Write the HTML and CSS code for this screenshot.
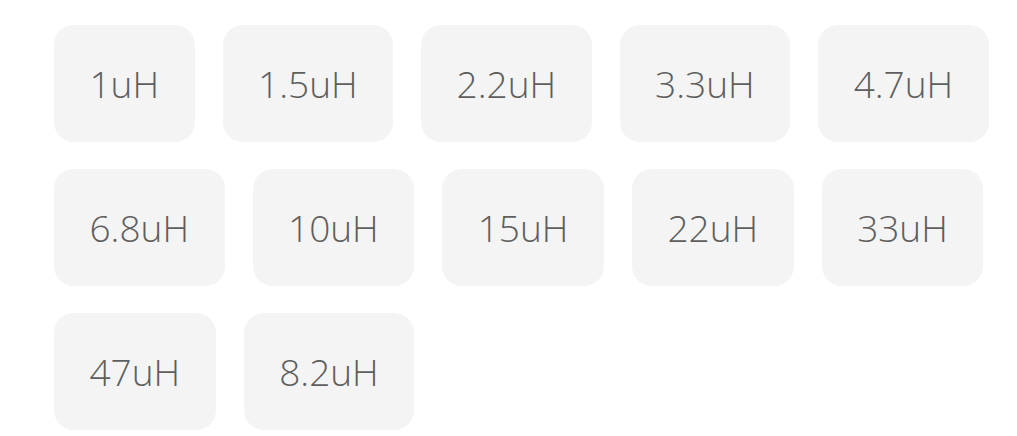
FILE: index.html
```html
<!DOCTYPE html>
<html>
<head>
<meta charset="utf-8">
<link rel="stylesheet" href="styles.css">
</head>
<body>
<div class="chips">
  <div class="chip">1uH</div>
  <div class="chip">1.5uH</div>
  <div class="chip">2.2uH</div>
  <div class="chip">3.3uH</div>
  <div class="chip">4.7uH</div>
  <div class="chip">6.8uH</div>
  <div class="chip">10uH</div>
  <div class="chip">15uH</div>
  <div class="chip">22uH</div>
  <div class="chip">33uH</div>
  <div class="chip">47uH</div>
  <div class="chip">8.2uH</div>
</div>
</body>
</html>
```
FILE: styles.css
```css
html, body {
  margin: 0;
  padding: 0;
  background: #ffffff;
}
.chips {
  display: flex;
  flex-wrap: wrap;
  column-gap: 28px;
  row-gap: 27px;
  padding: 25px 0 0 54px;
  width: 960px;
}
.chip {
  background: #f4f4f4;
  border-radius: 20px;
  padding: 35px 35.5px;
  height: 47px;
  line-height: 47px;
  font-family: "Open Sans", sans-serif;
  font-weight: 350;
  font-size: 37px;
  color: #5e5e5e;
  white-space: nowrap;
}
```
